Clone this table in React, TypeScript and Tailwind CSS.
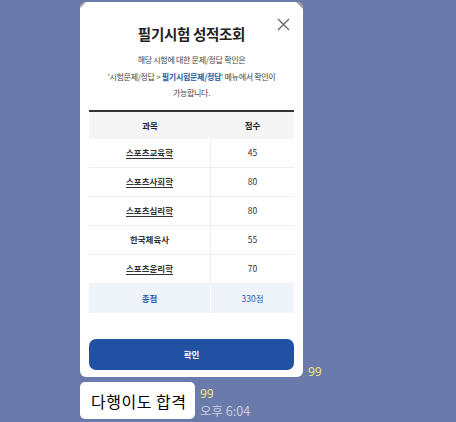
import React from "react";

const rows = [
  { s: "스포츠교육학", v: "45", u: true },
  { s: "스포츠사회학", v: "80", u: true },
  { s: "스포츠심리학", v: "80", u: true },
  { s: "한국체육사", v: "55", u: false },
  { s: "스포츠윤리학", v: "70", u: true },
];

export default function App() {
  return (
    <div
      className="w-[456px] h-[422px] bg-[#6a7aab] overflow-hidden pl-[80px] pt-[2px]"
      style={{ fontFamily: '"Noto Sans CJK KR", "Noto Sans", sans-serif' }}
    >
      <div className="flex items-end gap-[5px]">
        <div className="relative w-[223px] h-[375px] bg-white rounded-[6px] overflow-hidden flex flex-col">
          <div className="absolute left-0 top-0 w-[6px] h-[6px] bg-[#9a9a9a] [clip-path:polygon(0_0,100%_0,0_100%)]" />
          <div className="absolute right-0 top-0 w-[7px] h-[7px] bg-[#9a9a9a] [clip-path:polygon(0_0,100%_0,100%_100%)]" />
          <div className="relative pt-[22px] text-center">
            <div className="text-[14.5px] font-bold text-[#222] leading-[20px] tracking-[-0.3px]">필기시험 성적조회</div>
            <svg className="absolute right-[13px] top-[16px]" width="13" height="13" viewBox="0 0 13 13">
              <path d="M1 1L12 12M12 1L1 12" stroke="#666" strokeWidth="1.3" />
            </svg>
            <div className="mt-[8px] text-[8px] leading-[16.5px] text-[#444] tracking-[-0.3px]">
              <div>해당 시험에 대한 문제/정답 확인은</div>
              <div>
                '시험문제/정답 &gt; <span className="text-[#2a5aa8] font-bold">필기시험문제/정답</span>' 메뉴에서 확인이
              </div>
              <div>가능합니다.</div>
            </div>
          </div>
          <div className="mx-[9px] mt-[8px] border-t-2 border-[#333]">
            <div className="grid grid-cols-[122px_1fr] h-[27px] bg-[#f5f5f5] text-[8.5px] font-bold text-[#222] items-center text-center">
              <div>과목</div>
              <div>점수</div>
            </div>
            {rows.map((r) => (
              <div
                key={r.s}
                className="grid grid-cols-[122px_1fr] h-[29px] border-b border-[#eeeeee] text-[8.5px] text-[#333] items-center text-center"
              >
                <div className={"h-full flex items-center justify-center border-r border-[#f0f0f0] font-bold " + (r.u ? "underline underline-offset-2" : "")}>
                  {r.s}
                </div>
                <div>{r.v}</div>
              </div>
            ))}
            <div className="grid grid-cols-[122px_1fr] h-[29px] bg-[#eef4f9] text-[8.5px] text-[#2a5aa8] items-center text-center">
              <div className="h-full flex items-center justify-center border-r border-white font-bold">총점</div>
              <div>330점</div>
            </div>
          </div>
          <div className="mx-[9px] mt-[26px] h-[31px] rounded-[7px] bg-[#2251a4] flex items-center justify-center text-white text-[8.5px] font-bold">
            확인
          </div>
        </div>
        <div className="text-[12px] text-[#f3e27a] leading-[14px] mb-[-2px]" style={{ fontFamily: '"Noto Sans", sans-serif' }}>99</div>
      </div>
      <div className="flex items-end gap-[5px] mt-[5px]">
        <div className="h-[37px] w-[115px] bg-white rounded-[5px] flex items-center pl-[11px] text-[16px] text-black tracking-[0.5px]">
          다행이도 합격
        </div>
        <div className="flex flex-col gap-[2px] mb-[1px]">
          <span className="block h-[14px] text-[12px] leading-[14px] text-[#f3e27a]" style={{ fontFamily: '"Noto Sans", sans-serif' }}>99</span>
          <span className="block h-[15px] text-[12.5px] leading-[15px] text-[#c9cfe0]">오후 6:04</span>
        </div>
      </div>
    </div>
  );
}
